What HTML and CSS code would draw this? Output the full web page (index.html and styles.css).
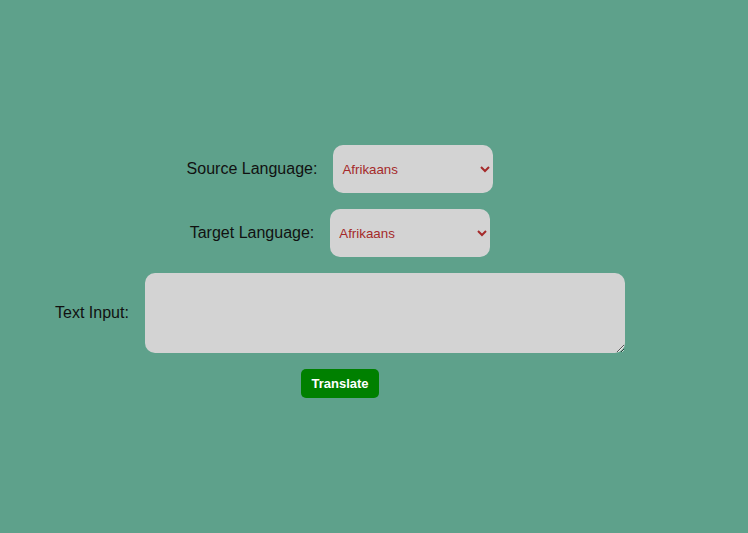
FILE: index.html
```html
<!DOCTYPE html>
<html>
<head>
<meta charset="utf-8">
<link rel="stylesheet" href="styles.css">
</head>
<body>
<div class="wrap">
  <form class="form">
    <div class="row">
      <label class="label" for="src">Source Language:</label>
      <select id="src" class="select"><option>Afrikaans</option></select>
    </div>
    <div class="row">
      <label class="label" for="tgt">Target Language:</label>
      <select id="tgt" class="select"><option>Afrikaans</option></select>
    </div>
    <div class="row">
      <label class="label" for="txt">Text Input:</label>
      <textarea id="txt" class="textarea"></textarea>
    </div>
    <button type="button" class="btn">Translate</button>
  </form>
</div>
</body>
</html>
```
FILE: styles.css
```css
html, body {
  margin: 0;
  padding: 0;
  background: #5ea18b;
  font-family: "Liberation Sans", Arial, sans-serif;
}
.wrap {
  width: 680px;
  padding-top: 145px;
}
.form {
  display: flex;
  flex-direction: column;
  align-items: center;
  gap: 16px;
}
.row {
  display: flex;
  align-items: center;
  gap: 16px;
}
.label {
  font-size: 16px;
  color: #111;
}
.select {
  width: 160px;
  height: 48px;
  border: none;
  border-radius: 10px;
  background: #d3d3d3;
  color: #a52a2a;
  font-family: "Liberation Sans", Arial, sans-serif;
  font-size: 13.33px;
  padding: 0 5px;
  outline: none;
}
.textarea {
  width: 480px;
  height: 80px;
  box-sizing: border-box;
  border: none;
  border-radius: 10px;
  background: #d3d3d3;
  display: block;
  margin: 0;
}
.btn {
  width: 78px;
  height: 29px;
  border: none;
  border-radius: 5px;
  background: #008000;
  color: #fff;
  font-family: "Liberation Sans", Arial, sans-serif;
  font-weight: bold;
  font-size: 13px;
  padding: 0;
}
```
